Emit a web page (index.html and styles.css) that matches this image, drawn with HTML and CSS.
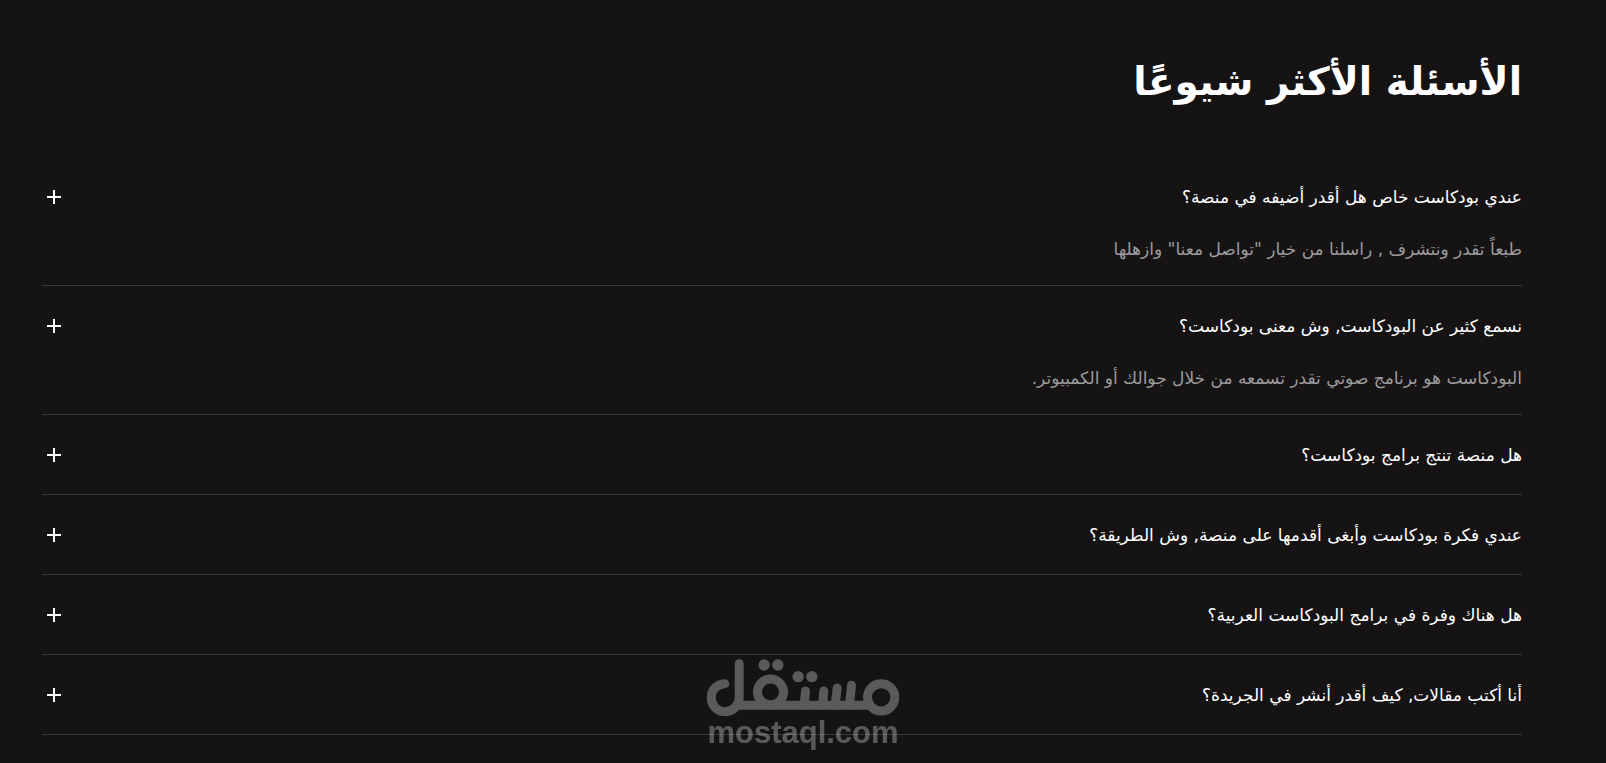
FILE: index.html
```html
<!DOCTYPE html>
<html lang="ar" dir="rtl">
<head>
<meta charset="utf-8">
<meta name="viewport" content="width=device-width, initial-scale=1">
<title>الأسئلة الأكثر شيوعًا</title>
<link rel="stylesheet" href="styles.css">
</head>
<body>
<main class="faq">
  <h1 class="faq-title">الأسئلة الأكثر شيوعًا</h1>
  <div class="faq-list">
    <section class="faq-item">
      <button class="faq-question" type="button" aria-expanded="true" aria-controls="answer-1"><span>عندي بودكاست خاص هل أقدر أضيفه في منصة؟</span><svg class="plus" viewBox="0 0 24 24" aria-hidden="true"><path d="M5 12h14M12 5v14"/></svg></button>
      <p class="faq-answer" id="answer-1">طبعاً تقدر ونتشرف , راسلنا من خيار "تواصل معنا" وازهلها</p>
    </section>
    <section class="faq-item">
      <button class="faq-question" type="button" aria-expanded="true" aria-controls="answer-2"><span>نسمع كثير عن البودكاست, وش معنى بودكاست؟</span><svg class="plus" viewBox="0 0 24 24" aria-hidden="true"><path d="M5 12h14M12 5v14"/></svg></button>
      <p class="faq-answer" id="answer-2">البودكاست هو برنامج صوتي تقدر تسمعه من خلال جوالك أو الكمبيوتر.</p>
    </section>
    <section class="faq-item">
      <button class="faq-question" type="button" aria-expanded="false"><span>هل منصة تنتج برامج بودكاست؟</span><svg class="plus" viewBox="0 0 24 24" aria-hidden="true"><path d="M5 12h14M12 5v14"/></svg></button>
    </section>
    <section class="faq-item">
      <button class="faq-question" type="button" aria-expanded="false"><span>عندي فكرة بودكاست وأبغى أقدمها على منصة, وش الطريقة؟</span><svg class="plus" viewBox="0 0 24 24" aria-hidden="true"><path d="M5 12h14M12 5v14"/></svg></button>
    </section>
    <section class="faq-item">
      <button class="faq-question" type="button" aria-expanded="false"><span>هل هناك وفرة في برامج البودكاست العربية؟</span><svg class="plus" viewBox="0 0 24 24" aria-hidden="true"><path d="M5 12h14M12 5v14"/></svg></button>
    </section>
    <section class="faq-item">
      <button class="faq-question" type="button" aria-expanded="false"><span>أنا أكتب مقالات, كيف أقدر أنشر في الجريدة؟</span><svg class="plus" viewBox="0 0 24 24" aria-hidden="true"><path d="M5 12h14M12 5v14"/></svg></button>
    </section>
  </div>
</main>
<div class="watermark" dir="ltr">
  <svg class="watermark-logo" viewBox="48 57 579 171" role="img" aria-label="مستقل">
    <g class="logo-strokes">
      <circle cx="572" cy="172" r="41"/>
      <path d="M103 131a42 42 0 1 0 43 42V71"/>
      <path class="logo-base" d="M136 196H540"/>
      <circle cx="240" cy="156" r="39"/>
      <path d="M345 153l-4 43M400 153l-4 43M440 144l-6 52M483 136l-6 60"/>
    </g>
    <g class="logo-dots">
      <circle cx="221" cy="75" r="17"/><circle cx="262" cy="75" r="17"/>
      <circle cx="323" cy="110" r="17"/><circle cx="364" cy="110" r="17"/>
    </g>
  </svg>
  <span class="watermark-name">mostaql.com</span>
</div>
</body>
</html>
```
FILE: styles.css
```css
* {
  box-sizing: border-box;
}

body {
  margin: 0;
  background: #151314;
  color: #fff;
  font-family: "DejaVu Sans", sans-serif;
}

.faq {
  padding: 50px 84px 28px 42px;
}

.faq-title {
  margin: 0 0 43px;
  font-size: 39px;
  font-weight: 700;
  line-height: 64px;
  white-space: nowrap;
}

.faq-item {
  border-bottom: 1px solid #393738;
}

.faq-question {
  display: flex;
  align-items: center;
  justify-content: space-between;
  width: 100%;
  height: 79px;
  padding: 0;
  border: 0;
  background: none;
  color: inherit;
  font: 500 17px/24px "DejaVu Sans", sans-serif;
  text-align: start;
  cursor: pointer;
}

.plus {
  width: 24px;
  height: 24px;
  flex: none;
  fill: none;
  stroke: #fff;
  stroke-width: 2;
}

.faq-answer {
  margin: 0;
  padding-bottom: 23px;
  color: #9d9b9c;
  font-size: 17px;
  line-height: 26px;
}

.watermark {
  position: fixed;
  bottom: 13px;
  left: 50%;
  display: flex;
  flex-direction: column;
  align-items: center;
  transform: translateX(-50%);
  opacity: 0.3;
  pointer-events: none;
}

.watermark-logo {
  width: 193px;
  height: 57px;
}

.logo-strokes {
  fill: none;
  stroke: #fff;
  stroke-width: 27;
  stroke-linecap: round;
}

.logo-base {
  stroke-linecap: butt;
}

.logo-dots {
  fill: #fff;
}

.watermark-name {
  font: 700 31px/34px "Liberation Sans", sans-serif;
}
```
